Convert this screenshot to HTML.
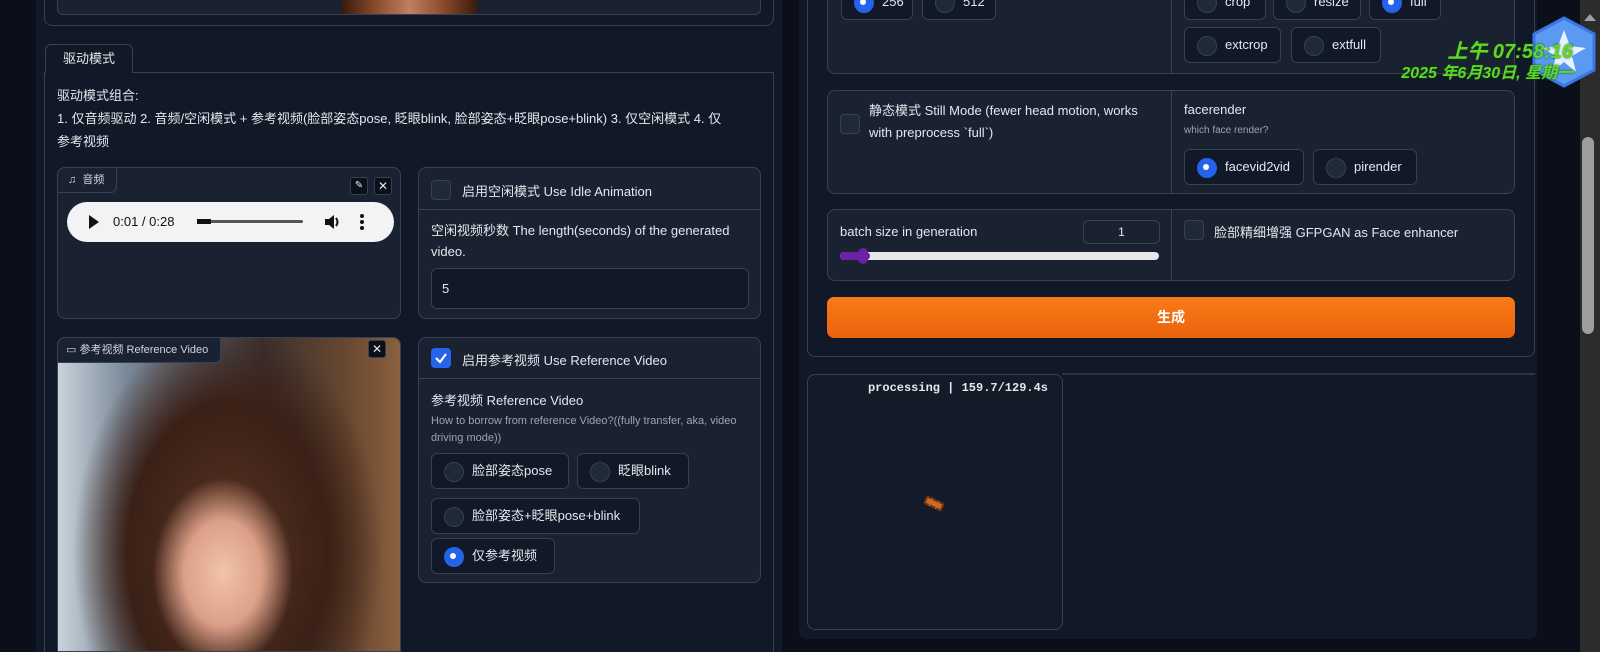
<!DOCTYPE html>
<html><head><meta charset="utf-8"><style>
*{box-sizing:border-box;margin:0;padding:0}
body{width:1600px;height:652px;overflow:hidden;background:#0b0f19;font-family:"Liberation Sans","Noto Sans CJK SC",sans-serif;color:#e5e7eb;position:relative;font-size:13px}
.a{position:absolute}
.col{background:#111827}
.blk{position:absolute;background:#1a2130;border:1px solid #374151;border-radius:8px}
.lbl{font-size:13px;color:#e5e7eb}
.cb{position:absolute;width:20px;height:20px;border:1px solid #374151;border-radius:4px;background:#1f2937}
.rad{position:absolute;height:36px;border:1px solid #374151;border-radius:6px;background:#111827;font-size:13px;color:#e5e7eb;padding-left:40px;line-height:34px}
.rad:before{content:"";position:absolute;left:12px;top:8px;width:18px;height:18px;border-radius:50%;background:#1f2937;border:1px solid #374151}
.rad.on:before{background:#2563eb;border-color:#2563eb}
.rad.on:after{content:"";position:absolute;left:18px;top:14px;width:6px;height:6px;border-radius:50%;background:#fff}
.muted{color:#9ca3af;font-size:11px}
</style></head><body>
<div class="a col" style="left:36px;top:0;width:746px;height:652px"></div>
<div class="a" style="left:44px;top:0;width:730px;height:26px;border:1px solid #374151;border-top:none;border-radius:0 0 8px 8px"></div>
<div class="a" style="left:57px;top:0;width:704px;height:15px;background:#1a2130;border:1px solid #374151;border-top:none;border-radius:0 0 6px 6px"></div>
<div class="a" style="left:342px;top:0;width:135px;height:14px;background:linear-gradient(90deg,#3a1a0e,#8a4a2c,#c08060,#8a4a2c,#3a1a0e)"></div>
<div class="a" style="left:44px;top:72px;width:730px;height:580px;border:1px solid #374151;border-bottom:none;background:#111827"></div>
<div class="a" style="left:45px;top:44px;width:88px;height:29px;border:1px solid #374151;border-bottom:none;border-radius:6px 6px 0 0;background:#111827;font-size:13px;line-height:28px;text-align:center">驱动模式</div>
<div class="a" style="left:57px;top:84px;width:690px;font-size:13px;line-height:23px;color:#e5e7eb">驱动模式组合:<br>1. 仅音频驱动 2. 音频/空闲模式 + 参考视频(脸部姿态pose, 眨眼blink, 脸部姿态+眨眼pose+blink) 3. 仅空闲模式 4. 仅<br>参考视频</div>
<!-- audio -->
<div class="blk" style="left:57px;top:167px;width:344px;height:152px">
 <div class="a" style="left:-1px;top:-1px;width:60px;height:26px;border:1px solid #374151;border-radius:8px 0 6px 0;font-size:11px;line-height:24px;padding-left:10px;color:#d1d5db">♫&nbsp; 音频</div>
 <div class="a" style="left:292px;top:9px;width:18px;height:18px;background:#0b0f19;border:1px solid #374151;border-radius:3px;font-size:10px;text-align:center;line-height:16px">✎</div>
 <div class="a" style="left:316px;top:9px;width:18px;height:18px;background:#0b0f19;border:1px solid #374151;border-radius:3px;font-size:12px;text-align:center;line-height:16px">✕</div>
 <div class="a" style="left:9px;top:34px;width:327px;height:40px;background:#f1f3f4;border-radius:20px;color:#111;font-size:13px">
  <div class="a" style="left:22px;top:13px;width:0;height:0;border-left:10px solid #111;border-top:7px solid transparent;border-bottom:7px solid transparent"></div>
  <div class="a" style="left:46px;top:12px">0:01 / 0:28</div>
  <div class="a" style="left:130px;top:18px;width:106px;height:3px;background:#555;border-radius:2px"></div>
  <div class="a" style="left:130px;top:17px;width:14px;height:5px;background:#111"></div>
  <svg class="a" style="left:256px;top:11px" width="18" height="18" viewBox="0 0 18 18"><path d="M2 6h4l5-4v14l-5-4H2z" fill="#111"/><path d="M13 5q3 4 0 8" stroke="#111" stroke-width="2" fill="none"/></svg>
  <div class="a" style="left:293px;top:12px;width:4px;height:4px;background:#111;border-radius:2px"></div>
  <div class="a" style="left:293px;top:18px;width:4px;height:4px;background:#111;border-radius:2px"></div>
  <div class="a" style="left:293px;top:24px;width:4px;height:4px;background:#111;border-radius:2px"></div>
 </div>
</div>
<!-- idle -->
<div class="blk" style="left:418px;top:167px;width:343px;height:152px">
 <div class="cb" style="left:12px;top:12px"></div>
 <div class="a lbl" style="left:43px;top:13px">启用空闲模式 Use Idle Animation</div>
 <div class="a" style="left:0;top:41px;width:341px;border-top:1px solid #374151"></div>
 <div class="a lbl" style="left:12px;top:52px;width:320px;line-height:21px">空闲视频秒数 The length(seconds) of the generated video.</div>
 <div class="a" style="left:12px;top:100px;width:318px;height:41px;border:1px solid #374151;border-radius:6px;background:#111827;padding:12px 10px">5</div>
</div>
<!-- ref video -->
<div class="a" style="left:57px;top:337px;width:344px;height:315px;border:1px solid #374151;border-radius:8px 8px 0 0;overflow:hidden;background:
radial-gradient(ellipse 70px 95px at 165px 235px,#f0c4aa 0%,#dca088 55%,rgba(0,0,0,0) 100%),
radial-gradient(ellipse 155px 230px at 170px 215px,#5a3424 0%,#3a2016 65%,rgba(0,0,0,0) 100%),
linear-gradient(90deg,#c9d3db 0%,#7a8898 20%,#3a3030 60%,#6a4830 85%,#8a6040 100%)">
 <div class="a" style="left:-1px;top:-1px;width:164px;height:26px;background:#1a2130;border:1px solid #374151;border-radius:8px 0 6px 0;font-size:11px;line-height:24px;padding-left:8px;color:#d1d5db">▭ 参考视频 Reference Video</div>
 <div class="a" style="left:310px;top:2px;width:18px;height:18px;background:#0b0f19;border:1px solid #374151;border-radius:3px;font-size:12px;text-align:center;line-height:16px">✕</div>
</div>
<!-- ref options -->
<div class="blk" style="left:418px;top:337px;width:343px;height:246px">
 <div class="a" style="left:12px;top:10px;width:20px;height:20px;background:#2563eb;border-radius:4px"><svg width="20" height="20"><path d="M5 10l4 4 6-8" stroke="#fff" stroke-width="2.2" fill="none"/></svg></div>
 <div class="a lbl" style="left:43px;top:12px">启用参考视频 Use Reference Video</div>
 <div class="a" style="left:0;top:40px;width:341px;border-top:1px solid #374151"></div>
 <div class="a lbl" style="left:12px;top:52px">参考视频 Reference Video</div>
 <div class="a muted" style="left:12px;top:75px;width:320px;line-height:17px">How to borrow from reference Video?((fully transfer, aka, video driving mode))</div>
 <div class="rad" style="left:12px;top:115px;width:138px">脸部姿态pose</div>
 <div class="rad" style="left:158px;top:115px;width:112px">眨眼blink</div>
 <div class="rad" style="left:12px;top:160px;width:209px">脸部姿态+眨眼pose+blink</div>
 <div class="rad on" style="left:12px;top:200px;width:124px">仅参考视频</div>
</div>
<!-- right column -->
<div class="a col" style="left:799px;top:0;width:738px;height:639px;border-radius:0 0 8px 8px"></div>
<div class="a" style="left:807px;top:0;width:728px;height:357px;border:1px solid #374151;border-top:none;border-radius:0 0 8px 8px"></div>
<div class="blk" style="left:827px;top:-10px;width:688px;height:84px;border-radius:0 0 8px 8px">
 <div class="a" style="left:343px;top:0;height:82px;border-left:1px solid #374151"></div>
 <div class="rad on" style="left:13px;top:-7px;width:72px">256</div>
 <div class="rad" style="left:94px;top:-7px;width:74px">512</div>
 <div class="rad" style="left:356px;top:-7px;width:82px">crop</div>
 <div class="rad" style="left:445px;top:-7px;width:88px">resize</div>
 <div class="rad on" style="left:541px;top:-7px;width:72px">full</div>
 <div class="rad" style="left:356px;top:36px;width:97px">extcrop</div>
 <div class="rad" style="left:463px;top:36px;width:90px">extfull</div>
</div>
<div class="blk" style="left:827px;top:90px;width:688px;height:104px">
 <div class="a" style="left:343px;top:0;height:102px;border-left:1px solid #374151"></div>
 <div class="cb" style="left:12px;top:23px"></div>
 <div class="a lbl" style="left:41px;top:9px;width:285px;line-height:22px">静态模式 Still Mode (fewer head motion, works with preprocess `full`)</div>
 <div class="a lbl" style="left:356px;top:11px">facerender</div>
 <div class="a muted" style="left:356px;top:34px;font-size:10px">which face render?</div>
 <div class="rad on" style="left:356px;top:58px;width:120px">facevid2vid</div>
 <div class="rad" style="left:485px;top:58px;width:104px">pirender</div>
</div>
<div class="blk" style="left:827px;top:209px;width:688px;height:72px">
 <div class="a" style="left:343px;top:0;height:70px;border-left:1px solid #374151"></div>
 <div class="a lbl" style="left:12px;top:14px">batch size in generation</div>
 <div class="a" style="left:255px;top:10px;width:77px;height:24px;border:1px solid #374151;border-radius:6px;text-align:center;line-height:22px;font-size:12px">1</div>
 <div class="a" style="left:12px;top:42px;width:319px;height:8px;background:#e5e7eb;border-radius:4px"></div>
 <div class="a" style="left:12px;top:42px;width:30px;height:8px;background:#6b21a8;border-radius:4px"></div>
 <div class="a" style="left:30px;top:38px;width:10px;height:16px;background:#6b21a8;border-radius:5px"></div>
 <div class="cb" style="left:356px;top:10px"></div>
 <div class="a lbl" style="left:386px;top:12px">脸部精细增强 GFPGAN as Face enhancer</div>
</div>
<div class="a" style="left:827px;top:297px;width:688px;height:41px;border-radius:7px;background:linear-gradient(180deg,#f97b16,#ea620f);color:#fff;font-size:14px;font-weight:bold;text-align:center;line-height:41px">生成</div>
<div class="a" style="left:1062px;top:373px;width:473px;border-top:2px solid #2a3344"></div>
<div class="a" style="left:807px;top:374px;width:256px;height:256px;border:1px solid #374151;border-radius:8px;background:#131b29">
 <div class="a" style="right:14px;top:6px;font-family:'Liberation Mono',monospace;font-size:12px;color:#e5e7eb;font-weight:bold">processing | 159.7/129.4s</div>
 <div class="a" style="left:116px;top:124px;width:20px;height:9px;background:#c96a2a;transform:rotate(25deg);border-radius:2px;border:2px dashed #6b3010"></div>
</div>
<div class="a" style="left:1580px;top:0;width:20px;height:652px;background:#2c2c2c"></div>
<div class="a" style="left:1584px;top:14px;width:0;height:0;border-bottom:7px solid #a0a0a0;border-left:6px solid transparent;border-right:6px solid transparent"></div>
<div class="a" style="left:1582px;top:137px;width:12px;height:197px;background:#9e9e9e;border-radius:6px"></div>
<svg class="a" style="left:1530px;top:16px" width="68" height="72" viewBox="0 0 68 72"><polygon points="34,2 64,18 64,54 34,70 4,54 4,18" fill="#5a9af2" stroke="#3a78e6" stroke-width="3"/><polygon points="34,14 40,30 56,32 42,40 46,56 34,46 22,56 26,40 12,32 28,30" fill="#e8f2ff"/></svg>
<div class="a" style="right:27px;top:35px;font-size:20px;font-weight:bold;font-style:italic;color:#5ad92a;text-shadow:0 0 2px #1a4a00">上午 07:58:16</div>
<div class="a" style="right:27px;top:59px;font-size:16px;font-weight:bold;font-style:italic;color:#5ad92a;text-shadow:0 0 2px #1a4a00">2025 年6月30日, 星期一</div>
</body></html>
